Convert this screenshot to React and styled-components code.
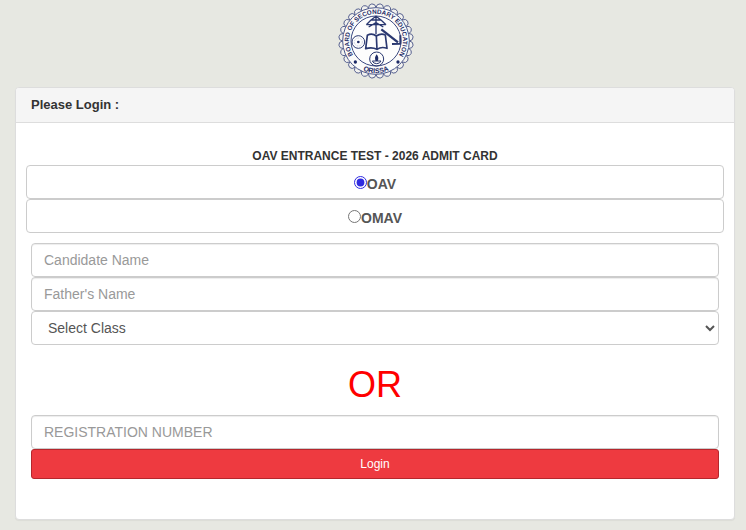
import React, { Component } from 'react';
import styled, { createGlobalStyle } from 'styled-components';

const POINTS = 28;

// wavy, pointed rim around the seal
function rimPath() {
    const at = (radius, step) => {
        const angle = (step * Math.PI) / POINTS;
        return `${(radius * Math.cos(angle)).toFixed(1)} ${(radius * Math.sin(angle)).toFixed(1)}`;
    };
    let d = `M${at(101, 0)}`;
    for (let i = 0; i < POINTS; i++) {
        d += ` Q${at(112, i * 2 + 0.2)} ${at(112, i * 2 + 1)} Q${at(112, i * 2 + 1.8)} ${at(101, i * 2 + 2)}`;
    }
    return d + 'Z';
}

function Seal() {
    return (
        <SealSvg viewBox="-120 -114 234 228" role="img" aria-label="Board of Secondary Education, Orissa">
            <defs>
                <path id="sealTop" d="M-69 42 A81 81 0 1 1 69 42" />
                <path id="sealBottom" d="M-66 70 A96 96 0 0 0 66 70" />
            </defs>
            <path d={rimPath()} fill="#f2f2ef" stroke="#56608f" strokeWidth="3" />
            <circle r="100" fill="#fbfbfa" stroke="#4a5689" strokeWidth="3" />
            <circle r="75" fill="#fdfdfd" stroke="#3a4780" strokeWidth="3" />
            <g fill="#1d2a66" fontFamily='"Liberation Sans", Arial, sans-serif' fontWeight="bold" textAnchor="middle">
                <text fontSize="19"><textPath href="#sealTop" startOffset="50%">BOARD OF SECONDARY EDUCATION</textPath></text>
                <text fontSize="21"><textPath href="#sealBottom" startOffset="50%">ORISSA</textPath></text>
            </g>
            <circle cx="-62" cy="63" r="5" fill="#1d2a66" />
            <circle cx="66" cy="63" r="5" fill="#1d2a66" />
            <g fill="none" stroke="#2a3870" strokeWidth="4" strokeLinejoin="round">
                <path d="M0 -74 V-20 M-29 -49 H30 M-29 -49 L-15 -63 H15 L30 -49 M-15 -63 L0 -74 L15 -63 M-22 -42 L0 -55 L22 -42" />
                <path d="M-26 -17 Q-12 -25 1 -15 Q15 -24 28 -18 L33 22 Q16 16 3 25 Q-12 17 -31 23 Z M1 -15 L3 25" strokeWidth="5" />
                <path d="M16 -35 L66 4" strokeWidth="7" />
                <path d="M73 -17 V8 L48 9" strokeWidth="6" />
                <circle cx="-53" cy="3" r="19" strokeWidth="3" />
                <circle cx="-53" cy="3" r="12" strokeWidth="1" strokeDasharray="2 3" />
                <circle cx="2" cy="54" r="21" strokeWidth="3" />
                <path d="M-11 60 H15 Q12 68 2 68 Q-8 68 -11 60 Z" strokeWidth="3" />
            </g>
            <circle cx="-53" cy="3" r="4" fill="#1d2a66" />
            <path d="M2 40 Q10 50 5 60 H-1 Q-6 50 2 40 Z" fill="#1d2a66" />
        </SealSvg>
    );
}

export default class App extends Component {
    constructor() {
        super();
        this.handleSchool = this.handleSchool.bind(this);
        this.handleSubmit = this.handleSubmit.bind(this);
    }

    state = {
        school: 'OAV',
    }

    handleSchool(evt) {
        this.setState({ school: evt.target.value })
    }

    handleSubmit(evt) {
        evt.preventDefault();
    }

    render() {
        return (
            <>
                <GlobalStyle />
                <Page>
                    <Header><Seal /></Header>
                    <Panel>
                        <PanelHeading>Please Login :</PanelHeading>
                        <PanelBody onSubmit={this.handleSubmit}>
                            <FormTitle>OAV ENTRANCE TEST - 2026 ADMIT CARD</FormTitle>
                            {['OAV', 'OMAV'].map((name) => (
                                <RadioRow key={name}>
                                    <Radio
                                        name="school"
                                        value={name}
                                        checked={this.state.school === name}
                                        onChange={this.handleSchool} />
                                    {name}
                                </RadioRow>
                            ))}
                            <FieldGroup>
                                <TextField placeholder="Candidate Name" aria-label="Candidate Name" />
                                <TextField placeholder="Father's Name" aria-label="Father's Name" />
                                <SelectField aria-label="Select Class">
                                    <option>Select Class</option>
                                </SelectField>
                                <Divider>OR</Divider>
                                <TextField placeholder="REGISTRATION NUMBER" aria-label="REGISTRATION NUMBER" />
                                <LoginButton type="submit">Login</LoginButton>
                            </FieldGroup>
                        </PanelBody>
                    </Panel>
                </Page>
            </>
        );
    };
}

const GlobalStyle = createGlobalStyle`
    * {
      box-sizing: border-box;
    }
    body {
      margin: 0;
      background: #e7e8e2;
      color: #333;
      font-family: "Liberation Sans", Arial, sans-serif;
      font-size: 14px;
    }
`;

const Page = styled.div`
    padding: 3px 11px 10px 15px;
`;

const Header = styled.header`
    display: flex;
    justify-content: center;
    padding-bottom: 8px;
`;

const SealSvg = styled.svg`
    display: block;
    width: 78px;
    height: 76px;
`;

const Panel = styled.main`
    background: #fff;
    border: 1px solid #ddd;
    border-radius: 4px;
    box-shadow: 0 1px 1px rgba(0, 0, 0, 0.05);
`;

const PanelHeading = styled.h1`
    margin: 0;
    padding: 9px 15px 10px;
    background: #f5f5f5;
    border-bottom: 1px solid #ddd;
    border-radius: 3px 3px 0 0;
    font-size: 13px;
    line-height: 15px;
`;

const PanelBody = styled.form`
    padding: 25px 10px 40px;
`;

const FormTitle = styled.h2`
    margin: 0;
    font-size: 12px;
    line-height: 17px;
    text-align: center;
`;

const RadioRow = styled.label`
    display: flex;
    justify-content: center;
    height: 34px;
    padding: 8px 12px;
    border: 1px solid #ccc;
    border-radius: 4px;
    color: #555;
    font-weight: bold;
    line-height: 20px;
`;

const Radio = styled.input.attrs({ type: 'radio' })`
    width: 13px;
    height: 13px;
    margin: 2px 0 0;
    accent-color: #2f2be0;
`;

const FieldGroup = styled.div`
    padding: 10px 5px 0;
`;

const TextField = styled.input.attrs({ type: 'text' })`
    display: block;
    width: 100%;
    height: 34px;
    padding: 6px 12px;
    background: #fff;
    border: 1px solid #ccc;
    border-radius: 4px;
    box-shadow: inset 0 1px 1px rgba(0, 0, 0, 0.075);
    color: #555;
    font: inherit;
    &::placeholder {
      color: #999;
    }
`;

const SelectField = styled.select`
    display: block;
    width: 100%;
    height: 34px;
    padding: 6px 12px;
    background: #fff;
    border: 1px solid #ccc;
    border-radius: 4px;
    color: #555;
    font: inherit;
`;

const Divider = styled.p`
    margin: 20px 0 10px;
    color: #f00;
    font-size: 36px;
    line-height: 40px;
    text-align: center;
`;

const LoginButton = styled.button`
    display: block;
    width: 100%;
    height: 30px;
    background: #ee3a40;
    border: 1px solid #b5272d;
    border-radius: 3px;
    color: #fff;
    font-family: inherit;
    font-size: 12px;
    cursor: pointer;
`;
